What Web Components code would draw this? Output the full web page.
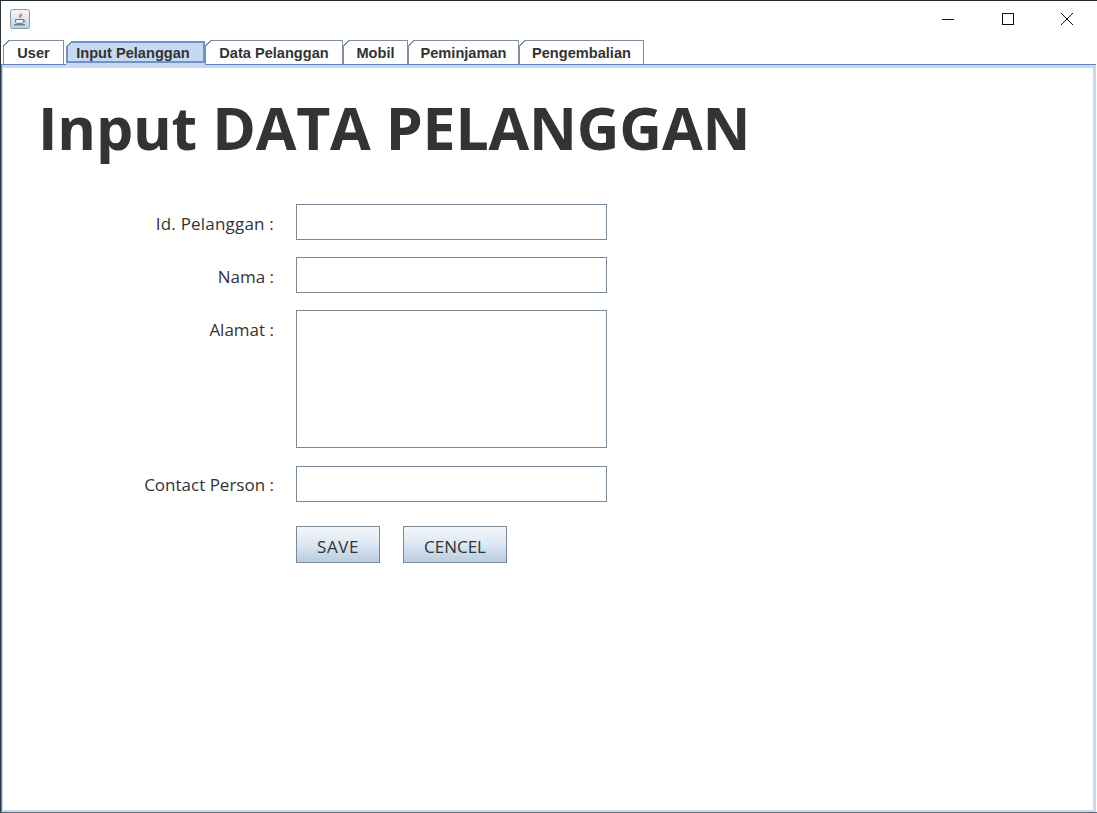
<!DOCTYPE html>
<html>
<head>
<meta charset="utf-8">
<title>Input Pelanggan</title>
<style>
html, body { margin: 0; height: 100%; background: #fff; }
</style>
</head>
<body>
<app-window>
  <title-bar></title-bar>
  <tab-bar>
    <tab-item style="--w:61px">User</tab-item>
    <tab-item selected style="--w:139px">Input Pelanggan</tab-item>
    <tab-item style="--w:138px">Data Pelanggan</tab-item>
    <tab-item style="--w:65px">Mobil</tab-item>
    <tab-item style="--w:111px">Peminjaman</tab-item>
    <tab-item style="--w:125px">Pengembalian</tab-item>
  </tab-bar>
  <tab-panel>
    <h1 slot="heading">Input DATA PELANGGAN</h1>
    <form-field label="Id. Pelanggan :" style="--ls:.2px"><text-box></text-box></form-field>
    <form-field label="Nama :" style="--top:17px"><text-box></text-box></form-field>
    <form-field label="Alamat :" style="--top:17px"><text-box style="--h:138px"></text-box></form-field>
    <form-field label="Contact Person :" style="--top:18px;--pt:9px"><text-box></text-box></form-field>
    <form-field style="--top:24px">
      <button-row>
        <push-button style="--w:84px;--ls:.6px">SAVE</push-button>
        <push-button style="--w:104px">CENCEL</push-button>
      </button-row>
    </form-field>
  </tab-panel>
</app-window>

<script>
class AppWindow extends HTMLElement {
  constructor() {
    super()
    this.attachShadow({mode: 'open'})
    this.shadowRoot.innerHTML = `
    <style>
    :host {
      display: flex;
      flex-direction: column;
      position: relative;
      width: 1097px;
      height: 813px;
      box-sizing: border-box;
      border-top: 1px solid #1c2a2c;
      border-left: 1px solid #2b3440;
      border-bottom: 1px solid #5e6a76;
      overflow: hidden;
      background: #fff;
    }
    .accent {
      position: absolute;
      top: -1px;
      left: 920px;
      width: 60px;
      height: 1px;
      background: #20cfcf;
    }
    .accent.side {
      top: 127px;
      left: -1px;
      width: 1px;
      height: 65px;
      background: #23808f;
    }
    </style>
    <div class="accent"></div>
    <div class="accent side"></div>
    <slot></slot>
    `
  }
}

class TitleBar extends HTMLElement {
  constructor() {
    super()
    this.attachShadow({mode: 'open'})
    this.shadowRoot.innerHTML = `
    <style>
    :host {
      display: flex;
      align-items: center;
      height: 39px;
      flex: none;
      padding-left: 9px;
    }
    .logo { width: 20px; height: 20px; margin-top: -3px; }
    .controls { margin-left: auto; display: flex; margin-top: -3px; }
    .controls svg { width: 59px; height: 20px; display: block; }
    </style>
    <svg class="logo" viewBox="0 0 20 20">
      <defs>
        <linearGradient id="face" x1="0" y1="0" x2="0" y2="1">
          <stop offset="0" stop-color="#f4f7fa"/>
          <stop offset="1" stop-color="#c3d1e0"/>
        </linearGradient>
      </defs>
      <rect x=".5" y=".5" width="19" height="19" rx="2" fill="url(#face)" stroke="#8b99a6"/>
      <path d="M10.500 2.500c1.500 1.500-2 3-1.200 5.500.3.800 1 1 1.500 1-.6-1.500 2.500-2.500 1.200-4.500-.3 1-1.500 1.300-1.500.5 0-.8.300-1.500 0-2.500z" fill="#e2762a"/>
      <path d="M5.500 10.500h8v2c0 1.300-1 2-2 2h-4c-1 0-2-.7-2-2z" fill="#e8eef4" stroke="#5b7f9e"/>
      <path d="M13.500 11c2 0 2 2.300-.3 2.300" fill="none" stroke="#5b7f9e"/>
      <path d="M4 15.800h11" stroke="#4a6f90" stroke-width="1.200"/>
    </svg>
    <div class="controls">
      <svg viewBox="0 0 59 20"><path d="M22 10.500h12" stroke="#111" fill="none"/></svg>
      <svg viewBox="0 0 59 20"><rect x="23.500" y="4.500" width="11" height="11" stroke="#111" fill="none"/></svg>
      <svg viewBox="0 0 59 20"><path d="M23 4l12 12M35 4L23 16" stroke="#111" fill="none"/></svg>
    </div>
    `
  }
}

class TabBar extends HTMLElement {
  constructor() {
    super()
    this.attachShadow({mode: 'open'})
    this.shadowRoot.innerHTML = `
    <style>
    :host {
      display: flex;
      align-items: flex-start;
      flex: none;
      height: 24px;
      padding-left: 2px;
      position: relative;
      z-index: 1;
    }
    </style>
    <slot></slot>
    `
  }
}

class TabItem extends HTMLElement {
  constructor() {
    super()
    this.attachShadow({mode: 'open'})
    this.shadowRoot.innerHTML = `
    <style>
    :host {
      display: block;
      position: relative;
      box-sizing: border-box;
      width: var(--w);
      height: 24px;
      flex: none;
      border: 1px solid #7f8fa0;
      border-bottom: 0;
      background: #fff;
      font: bold 14.6px/24px "Liberation Sans", Arial, sans-serif;
      color: #333;
      text-align: center;
    }
    :host::before {
      content: "";
      position: absolute;
      top: -1px;
      left: -1px;
      width: 6px;
      height: 6px;
      background: linear-gradient(135deg, #fff 0 44%, #7f8fa0 44% 60%, transparent 60%);
    }
    :host([selected]) {
      margin: 1px 0 0 2px;
      height: 22px;
      padding-right: 5px;
      background: #c5daf0;
      border: 2px solid #7590c8;
      line-height: 20px;
    }
    :host([selected])::before {
      top: -2px;
      left: -2px;
      background: linear-gradient(135deg, #fff 0 44%, #7590c8 44% 66%, transparent 66%);
    }
    :host([selected])::after {
      content: "";
      position: absolute;
      left: -2px;
      right: -2px;
      bottom: -4px;
      height: 2px;
      background: #c5daf0;
    }
    </style>
    <slot></slot>
    `
  }
}

class TabPanel extends HTMLElement {
  constructor() {
    super()
    this.attachShadow({mode: 'open'})
    this.shadowRoot.innerHTML = `
    <style>
    :host {
      display: block;
      flex: 1;
      margin-right: 1px;
      box-sizing: border-box;
      border-top: 1px solid #6382bf;
      border-left: 1px solid #6382bf;
      background: #c5daf0;
      padding: 3px 3px 2px 1px;
      min-height: 0;
    }
    .page {
      height: 100%;
      box-sizing: border-box;
      background: #fff;
      padding-top: 136px;
      position: relative;
    }
    ::slotted(h1) {
      margin: 0;
      position: absolute;
      top: 21px;
      left: 35px;
      font: bold 59px/76px "Open Sans", "Noto Sans", sans-serif;
      letter-spacing: -.2px;
      color: #333;
      white-space: nowrap;
    }
    </style>
    <div class="page">
      <slot name="heading"></slot>
      <slot></slot>
    </div>
    `
  }
}

class FormField extends HTMLElement {
  constructor() {
    super()
    this.attachShadow({mode: 'open'})
    this.shadowRoot.innerHTML = `
    <style>
    :host {
      display: grid;
      grid-template-columns: 271px auto;
      column-gap: 22px;
      margin-top: var(--top, 0);
      font: 17px/20px "Open Sans", "Noto Sans", sans-serif;
      color: #333;
    }
    .label {
      text-align: right;
      padding-top: var(--pt, 10px);
      white-space: nowrap;
      letter-spacing: var(--ls, 0);
    }
    </style>
    <div class="label"></div>
    <div><slot></slot></div>
    `
    this.shadowRoot.querySelector('.label').textContent = this.getAttribute('label') || ''
  }
}

class TextBox extends HTMLElement {
  constructor() {
    super()
    this.attachShadow({mode: 'open'})
    this.shadowRoot.innerHTML = `
    <style>
    :host {
      display: block;
      box-sizing: border-box;
      width: 311px;
      height: var(--h, 36px);
      border: 1px solid #7a8a99;
      background: #fff;
    }
    </style>
    `
  }
}

class ButtonRow extends HTMLElement {
  constructor() {
    super()
    this.attachShadow({mode: 'open'})
    this.shadowRoot.innerHTML = `
    <style>
    :host { display: flex; gap: 23px; }
    </style>
    <slot></slot>
    `
  }
}

class PushButton extends HTMLElement {
  constructor() {
    super()
    this.attachShadow({mode: 'open'})
    this.shadowRoot.innerHTML = `
    <style>
    :host {
      display: block;
      box-sizing: border-box;
      width: var(--w);
      height: 37px;
      border: 1px solid #7a8a99;
      background: linear-gradient(#f3f7fb, #dfe9f3 45%, #b8cde0);
      font: 17px/40px "Open Sans", "Noto Sans", sans-serif;
      letter-spacing: var(--ls, 0);
      color: #333;
      text-align: center;
    }
    </style>
    <slot></slot>
    `
  }
}

customElements.define('app-window', AppWindow)
customElements.define('title-bar', TitleBar)
customElements.define('tab-bar', TabBar)
customElements.define('tab-item', TabItem)
customElements.define('tab-panel', TabPanel)
customElements.define('form-field', FormField)
customElements.define('text-box', TextBox)
customElements.define('button-row', ButtonRow)
customElements.define('push-button', PushButton)
</script>
</body>
</html>
